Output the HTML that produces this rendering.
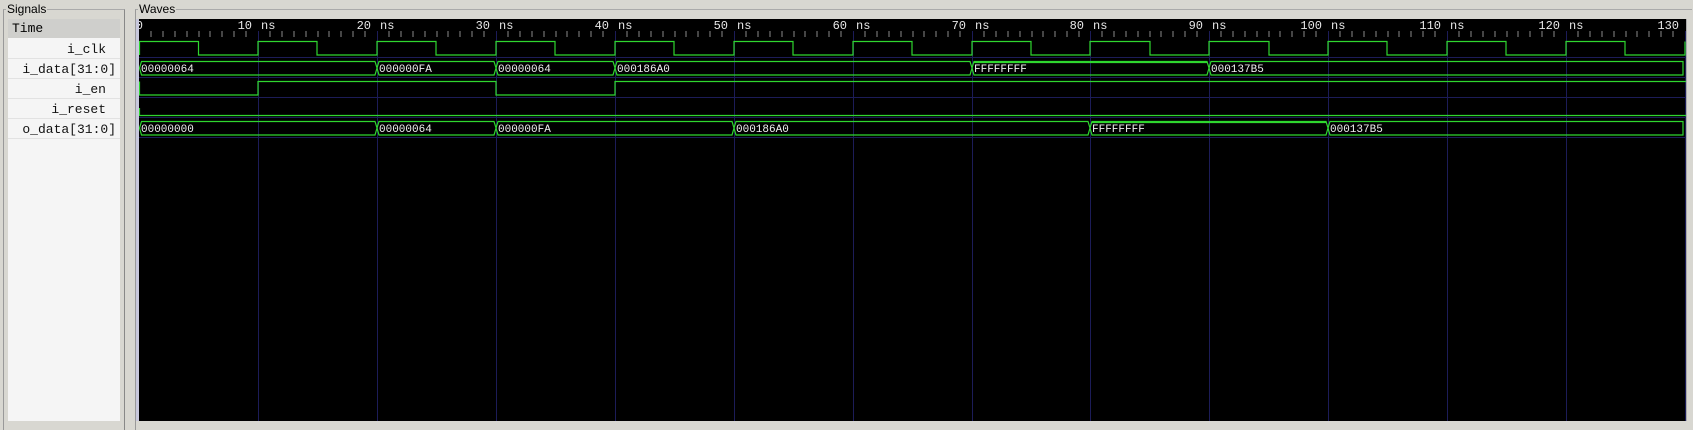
<!DOCTYPE html>
<html><head><meta charset="utf-8"><style>
body{margin:0;width:1693px;height:421px;overflow:hidden;background:#d8d7d1;font-family:"Liberation Sans",sans-serif;position:relative}
.a{position:absolute}
.mono{font-family:"Liberation Mono",monospace;font-size:13px}
.row{position:absolute;left:8px;width:112px;height:20px;border-bottom:1px solid #e2e2e2;text-align:right;line-height:21px;color:#111;box-sizing:border-box;padding-right:14px}
</style></head><body>
<div class="a" style="left:3px;top:9px;width:120px;height:420px;border-left:1px solid #999;border-top:1px solid #aaa;border-right:1px solid #888"></div>
<div class="a" style="left:6px;top:2px;font-size:12px;background:#d8d7d1;padding:0 1px">Signals</div>
<div class="a" style="left:8px;top:19px;width:112px;height:402px;background:#f5f5f5"></div>
<div class="a mono" style="left:8px;top:19px;width:112px;height:19px;background:#cfcfcc;line-height:20px;padding-left:4px;box-sizing:border-box">Time</div>
<div class="row mono" style="top:39px">i_clk</div>
<div class="row mono" style="top:59px;padding-right:4px">i_data[31:0]</div>
<div class="row mono" style="top:79px">i_en</div>
<div class="row mono" style="top:99px">i_reset</div>
<div class="row mono" style="top:119px;padding-right:4px">o_data[31:0]</div>
<div class="a" style="left:135px;top:9px;width:1556px;height:420px;border-left:1px solid #999;border-top:1px solid #aaa"></div>
<div class="a" style="left:136px;top:19px;width:3px;height:402px;background:#c8c8dc"></div>
<div class="a" style="left:138px;top:2px;font-size:12px;background:#d8d7d1;padding:0 1px">Waves</div>
<svg class="a" style="left:139px;top:19px" width="1547" height="402" viewBox="139 19 1547 402">
<rect x="139" y="19" width="1547" height="402" fill="#000"/>
<g stroke="#1c1c58" stroke-width="1">
<path d="M139 57.5H1686M139 77.5H1686M139 97.5H1686M139 117.5H1686M139 137.5H1686"/>
<path d="M258.5 31V421M377.5 31V421M496.5 31V421M615.5 31V421M734.5 31V421M853.5 31V421M972.5 31V421M1090.5 31V421M1209.5 31V421M1328.5 31V421M1447.5 31V421M1566.5 31V421M1685.5 31V421"/>
</g>
<path stroke="#8a8a8a" stroke-width="1" d="M151 31v6M163 31v6M175 31v6M187 31v6M199 31v6M210 31v6M222 31v6M234 31v6M246 31v6M270 31v6M282 31v6M294 31v6M306 31v6M318 31v6M329 31v6M341 31v6M353 31v6M365 31v6M389 31v6M401 31v6M413 31v6M425 31v6M437 31v6M448 31v6M460 31v6M472 31v6M484 31v6M508 31v6M520 31v6M532 31v6M544 31v6M556 31v6M567 31v6M579 31v6M591 31v6M603 31v6M627 31v6M639 31v6M651 31v6M663 31v6M675 31v6M686 31v6M698 31v6M710 31v6M722 31v6M746 31v6M758 31v6M770 31v6M782 31v6M794 31v6M805 31v6M817 31v6M829 31v6M841 31v6M865 31v6M877 31v6M889 31v6M901 31v6M913 31v6M924 31v6M936 31v6M948 31v6M960 31v6M984 31v6M996 31v6M1008 31v6M1020 31v6M1032 31v6M1043 31v6M1055 31v6M1067 31v6M1079 31v6M1102 31v6M1114 31v6M1126 31v6M1138 31v6M1150 31v6M1161 31v6M1173 31v6M1185 31v6M1197 31v6M1221 31v6M1233 31v6M1245 31v6M1257 31v6M1269 31v6M1280 31v6M1292 31v6M1304 31v6M1316 31v6M1340 31v6M1352 31v6M1364 31v6M1376 31v6M1388 31v6M1399 31v6M1411 31v6M1423 31v6M1435 31v6M1459 31v6M1471 31v6M1483 31v6M1495 31v6M1507 31v6M1518 31v6M1530 31v6M1542 31v6M1554 31v6M1578 31v6M1590 31v6M1602 31v6M1614 31v6M1626 31v6M1637 31v6M1649 31v6M1661 31v6M1673 31v6"/>
<g fill="#e8e8e8" font-family="Liberation Mono,monospace" font-size="12" text-anchor="end">
<text x="143" y="29">0</text>
<text x="252" y="29">10</text><text x="371" y="29">20</text><text x="490" y="29">30</text><text x="609" y="29">40</text><text x="728" y="29">50</text><text x="847" y="29">60</text><text x="966" y="29">70</text><text x="1084" y="29">80</text><text x="1203" y="29">90</text><text x="1322" y="29">100</text><text x="1441" y="29">110</text><text x="1560" y="29">120</text><text x="1679" y="29">130</text>
</g>
<g fill="#e8e8e8" font-family="Liberation Mono,monospace" font-size="12">
<text x="261" y="29">ns</text><text x="380" y="29">ns</text><text x="499" y="29">ns</text><text x="618" y="29">ns</text><text x="737" y="29">ns</text><text x="856" y="29">ns</text><text x="975" y="29">ns</text><text x="1093" y="29">ns</text><text x="1212" y="29">ns</text><text x="1331" y="29">ns</text><text x="1450" y="29">ns</text><text x="1569" y="29">ns</text><text x="1688" y="29">ns</text>
</g>
<g fill="none" stroke="#2fd62f" stroke-width="1.2">
<path d="M139.5 55V41.5H198.5V55H258V41.5H317V55H377V41.5H436V55H496V41.5H555V55H615V41.5H674V55H734V41.5H793V55H853V41.5H912V55H972V41.5H1031V55H1090V41.5H1150V55H1209V41.5H1269V55H1328V41.5H1387V55H1447V41.5H1506V55H1566V41.5H1625V55H1685V41.5"/>
<path d="M139.5 95V81.5H139.5V95H258V81.5H496V95H615V81.5H1686"/>
<path d="M139.5 108V115.5H1686"/>
<path d="M139.5 68L141.5 61.5H375L377 68L375 75H141.5ZM377 68L379 61.5H494L496 68L494 75H379ZM496 68L498 61.5H613L615 68L613 75H498ZM615 68L617 61.5H970L972 68L970 75H617ZM972 68L974 61.5H1207L1209 68L1207 75H974ZM1209 68L1211 61.5H1683V75H1211Z"/>
<path d="M974 62.5H1207" />
<path d="M139.5 128L141.5 121.5H375L377 128L375 135H141.5ZM377 128L379 121.5H494L496 128L494 135H379ZM496 128L498 121.5H732L734 128L732 135H498ZM734 128L736 121.5H1088L1090 128L1088 135H736ZM1090 128L1092 121.5H1326L1328 128L1326 135H1092ZM1328 128L1330 121.5H1683V135H1330Z"/>
<path d="M1092 122.5H1326"/>
</g>
<g fill="#f0f0f0" font-family="Liberation Mono,monospace" font-size="11">
<text x="141" y="72">00000064</text><text x="379" y="72">000000FA</text><text x="498" y="72">00000064</text><text x="617" y="72">000186A0</text><text x="974" y="72">FFFFFFFF</text><text x="1211" y="72">000137B5</text>
<text x="141" y="132">00000000</text><text x="379" y="132">00000064</text><text x="498" y="132">000000FA</text><text x="736" y="132">000186A0</text><text x="1092" y="132">FFFFFFFF</text><text x="1330" y="132">000137B5</text>
</g>
</svg>
<div class="a" style="left:1686px;top:19px;width:7px;height:402px;background:#d8d7d1;border-left:1px solid #aaa"></div>
</body></html>
